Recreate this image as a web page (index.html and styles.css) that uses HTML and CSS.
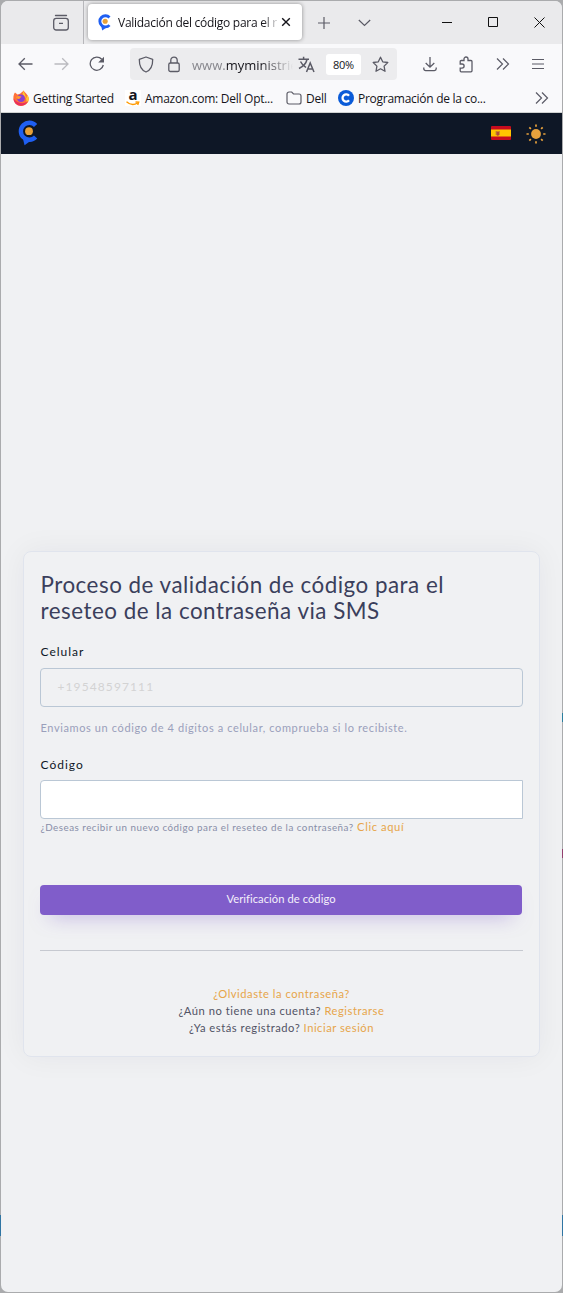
FILE: index.html
```html
<!DOCTYPE html>
<html lang="es">
<head>
<meta charset="utf-8">
<title>Validación del código para el reseteo</title>
<link rel="stylesheet" href="styles.css">
</head>
<body>
<svg class="defs" width="0" height="0" aria-hidden="true">
  <symbol id="brand" viewBox="0 0 22 26">
    <path d="M18.600 5.400A8.500 8.500 0 1 0 18.600 17" fill="none" stroke="#1f5ff2" stroke-width="4.400"/>
    <path d="M5.500 17L7.600 25.300L15 19.800Z" fill="#1f5ff2"/>
    <circle cx="12" cy="11.200" r="3.900" fill="#e8a038"/>
  </symbol>
  <symbol id="more" viewBox="0 0 14 14">
    <path d="M1 1.500L6.500 7L1 12.500M7 1.500L12.500 7L7 12.500" fill="none" stroke="#5b5b66" stroke-width="1.200"/>
  </symbol>
</svg>
<div class="window">
  <header class="tabs">
    <div class="view">
      <svg width="18" height="18" viewBox="0 0 18 18" fill="none" stroke="#5b5b66" stroke-width="1.300"><path d="M3.500 1.500h11" stroke-linecap="round"/><rect x="1.700" y="4.400" width="14.600" height="11.600" rx="2.500"/><path d="M7 9.300h4"/></svg>
    </div>
    <div class="tab">
      <svg width="15" height="17"><use href="#brand"/></svg>
      <span class="tab-title">Validación del código para el r</span>
      <svg class="tab-close" width="10" height="10" viewBox="0 0 10 10"><path d="M1.200 1.200l7.600 7.600M8.800 1.200l-7.600 7.600" stroke="#15141a" stroke-width="1.400"/></svg>
    </div>
    <svg class="plus" width="12" height="12" viewBox="0 0 12 12"><path d="M6 0v12M0 6h12" stroke="#5b5b66" stroke-width="1.200"/></svg>
    <svg class="chev" width="13" height="8" viewBox="0 0 13 8"><path d="M.8 1L6.500 6.500L12.200 1" fill="none" stroke="#5b5b66" stroke-width="1.200"/></svg>
    <div class="controls">
      <svg width="10" height="11" viewBox="0 0 10 11"><path d="M0 5.500h10" stroke="#111"/></svg>
      <svg width="11" height="11" viewBox="0 0 11 11"><path d="M.5 .5h9v9h-9z" fill="none" stroke="#111"/></svg>
      <svg width="11" height="11" viewBox="0 0 11 11"><path d="M.5 .5l10 10M10.500 .5l-10 10" stroke="#111"/></svg>
    </div>
  </header>

  <div class="toolbar">
    <svg class="back" width="15" height="14" viewBox="0 0 15 14" fill="none" stroke="#5b5b66" stroke-width="1.300"><path d="M14.500 7H1.200M6.800 1.200L1 7l5.800 5.800"/></svg>
    <svg class="forward" width="15" height="14" viewBox="0 0 15 14" fill="none" stroke="#bbbbc0" stroke-width="1.300"><path d="M.5 7h13.300M8.200 1.200L14 7l-5.800 5.800"/></svg>
    <svg class="reload" width="16" height="16" viewBox="0 0 16 16"><path d="M12.800 3.300A6.600 6.600 0 1 0 14.300 9" fill="none" stroke="#5b5b66" stroke-width="1.300"/><path d="M15 .8v5.800H9.200z" fill="#5b5b66"/></svg>
    <div class="url">
      <svg width="16" height="17" viewBox="0 0 16 17"><path d="M8 1L14.700 3.300C14.800 9.800 13.300 14 8 16C2.700 14 1.200 9.800 1.300 3.300Z" fill="none" stroke="#5b5b66" stroke-width="1.300" stroke-linejoin="round"/></svg>
      <svg class="lock" width="12" height="17" viewBox="0 0 12 17" fill="none" stroke="#5b5b66" stroke-width="1.300"><rect x=".8" y="7" width="10.400" height="8.500" rx="1.600"/><path d="M2.800 7V4.300a3.200 3.200 0 0 1 6.400 0V7"/></svg>
      <span class="address">www.<b>myministrie</b></span>
      <svg class="translate" width="17" height="17" viewBox="0 0 17 17" fill="none" stroke="#5b5b66" stroke-width="1.500"><path d="M.5 3.300h10.500M5.600 .8v2.500M2.500 5.500C4.500 9.500 6.500 10.500 8 11.500M9 3.500C8 8 4 11 1 12.500"/><path d="M8.500 16L12.200 7L16 16M9.800 13h5"/></svg>
      <span class="percent">80%</span>
      <svg class="star" width="17" height="17" viewBox="0 0 17 17"><path d="M8.500 1.200L10.700 5.800L15.800 6.500L12.100 10.100L13 15.300L8.500 12.800L4 15.300L4.900 10.100L1.200 6.500L6.300 5.800Z" fill="none" stroke="#5b5b66" stroke-width="1.300" stroke-linejoin="round"/></svg>
    </div>
    <div class="tools">
      <svg width="14" height="16" viewBox="0 0 14 16" fill="none" stroke="#5b5b66" stroke-width="1.300"><path d="M7 1v10M2.700 7L7 11.200L11.300 7M.8 11.500v1.300a1.800 1.800 0 0 0 1.800 1.800h8.800a1.800 1.800 0 0 0 1.800-1.800V11.500"/></svg>
      <svg width="14" height="17" viewBox="0 0 14 17"><path d="M1.200 8V5.500a1 1 0 0 1 1-1H5V3a2 2 0 0 1 4 0v1.500h3a1 1 0 0 1 1 1v9.300a1 1 0 0 1-1 1H2.200a1 1 0 0 1-1-1v-2.600H3a2 2 0 0 0 0-4.200Z" fill="none" stroke="#5b5b66" stroke-width="1.300"/></svg>
      <svg width="14" height="14"><use href="#more"/></svg>
      <svg width="12" height="12" viewBox="0 0 12 12"><path d="M0 1.500h12M0 6h12M0 10.500h12" stroke="#5b5b66" stroke-width="1.200"/></svg>
    </div>
  </div>

  <nav class="bookmarks">
    <svg class="firefox" width="16" height="16" viewBox="0 0 16 16"><path d="M2 2.500L4.500 4.500L7 3.800L10.800 .5C11.500 3 15.800 4.500 15.800 9A7.600 7.200 0 0 1 .4 8.500C.3 6 .9 4 2 2.500Z" fill="#ff7139"/><path d="M10.800 .5C10.800 3.500 13 5 13 8.500C14 7.500 13.500 6 14.500 5C16.500 8 16 12 13 14C15 8 11 6.500 9.500 4Z" fill="#ffcb2e"/><path d="M.5 8.500C1 13 4 15.800 8 15.700C12 15.700 14 13.500 15 11C10 15 4 13 .5 8.500Z" fill="#e9305d"/><circle cx="8" cy="8.200" r="3.800" fill="#8a3fd1"/><path d="M3 7c2-1.500 4-.8 5.500-.5C8 7.500 6.500 8 6.500 9C4.500 9 3.500 8.500 3 7Z" fill="#ff9a2b"/></svg>
    <span class="bm bm-start">Getting Started</span>
    <span class="amazon"><b>a</b><svg width="14" height="5" viewBox="0 0 14 5"><path d="M.5 .8Q6 5.500 11.500 2M9.500 1l3.200.2L11.700 4" fill="none" stroke="#f90" stroke-width="1.400"/></svg></span>
    <span class="bm bm-amazon">Amazon.com: Dell Opt...</span>
    <svg class="folder" width="16" height="14" viewBox="0 0 16 14"><path d="M1 3a2 2 0 0 1 2-2h2.700l1.800 2H13a2 2 0 0 1 2 2v6a2 2 0 0 1-2 2H3a2 2 0 0 1-2-2Z" fill="none" stroke="#5b5b66" stroke-width="1.200"/></svg>
    <span class="bm bm-dell">Dell</span>
    <svg class="prog" width="16" height="16" viewBox="0 0 16 16"><circle cx="8" cy="8" r="8" fill="#0a5bd8"/><path d="M11 5.800A3.600 3.600 0 1 0 11 10.200" fill="none" stroke="#fff" stroke-width="2.300"/></svg>
    <span class="bm bm-prog">Programación de la co...</span>
    <svg class="bm-more" width="14" height="14"><use href="#more"/></svg>
  </nav>

  <div class="site-nav">
    <svg class="logo" width="22" height="26"><use href="#brand"/></svg>
    <svg class="flag" width="20" height="14" viewBox="0 0 20 14"><rect width="20" height="14" rx="1" fill="#c60b1e"/><rect y="3.500" width="20" height="7" fill="#ffc400"/><path d="M4.500 5h1.500v4h-1.500zM8 5h1v4H8z" fill="#c8912c"/><path d="M5.500 5.500h2.500v3a1.200 1.200 0 0 1-2.500 0z" fill="#b34a35"/></svg>
    <svg class="sun" width="20" height="20" viewBox="0 0 20 20"><circle cx="10" cy="10" r="4.900" fill="#e7a13d"/><path d="M10 .5v2.300M10 17.200v2.300M.5 10h2.300M17.200 10h2.300M3.300 3.300l1.600 1.600M15.100 15.100l1.600 1.600M3.300 16.700l1.600-1.600M15.100 4.900l1.600-1.600" stroke="#e7a13d" stroke-width="1.700"/></svg>
  </div>

  <main class="page">
    <section class="card">
      <h1><span class="t1">Proceso de validación de código para el</span><br><span class="t2">reseteo de la contraseña via SMS</span></h1>
      <label class="label">Celular</label>
      <div class="field disabled">+19548597111</div>
      <p class="hint">Enviamos un código de 4 dígitos a celular, comprueba si lo recibiste.</p>
      <label class="label second">Código</label>
      <div class="field code"></div>
      <p class="resend"><small>¿Deseas recibir un nuevo código para el reseteo de la contraseña?</small> <a>Clic aquí</a></p>
      <button class="submit">Verificación de código</button>
      <hr>
      <div class="links">
        <div><a>¿Olvidaste la contraseña?</a></div>
        <div>¿Aún no tiene una cuenta? <a>Registrarse</a></div>
        <div>¿Ya estás registrado? <a>Iniciar sesión</a></div>
      </div>
    </section>
  </main>
</div>
</body>
</html>
```
FILE: styles.css
```css
* { box-sizing: border-box; }
html { background: #aaabad; }
body { margin: 0; padding: 1px; background: linear-gradient(#2f75a3, #2f75a3) 0 1215px / 100% 21px no-repeat, linear-gradient(#2b7f9f, #2b7f9f) 100% 713px / 1px 9px no-repeat, linear-gradient(#93406f, #93406f) 100% 849px / 1px 9px no-repeat; font-family: "Open Sans", sans-serif; }
.defs { position: absolute; }
svg { display: block; flex: none; }
.window { width: 561px; height: 1291px; border-radius: 7px; overflow: hidden; background: #f0f1f3; display: flex; flex-direction: column; }

.tabs { height: 43px; background: #eaeaec; display: flex; align-items: center; flex: none; }
.view { width: 83px; height: 43px; border-right: 1px solid #b7b7bb; padding: 13px 0 0 51px; }
.tab { width: 214px; height: 36px; margin: -1px 0 0 4px; background: #fff; border-radius: 4px; box-shadow: 0 0 4px rgba(0,0,0,.4); display: flex; align-items: center; padding-left: 9px; }
.tab-title { width: 162px; margin-left: 6px; overflow: hidden; white-space: nowrap; font-size: 12px; letter-spacing: -.27px; color: #15141a; -webkit-mask-image: linear-gradient(90deg, #000 145px, transparent 162px); mask-image: linear-gradient(90deg, #000 145px, transparent 162px); }
.tab-close { margin-left: 1px; }
.plus { margin-left: 16px; }
.chev { margin-left: 28px; }
.controls { display: flex; margin-left: 71px; gap: 36px; }
.controls svg:last-child { margin-left: -1px; }

.toolbar { height: 40px; background: #f9f9fb; display: flex; align-items: center; flex: none; }
.back { margin-left: 17px; }
.forward { margin-left: 21px; }
.reload { margin-left: 20px; }
.url { width: 267px; height: 32px; margin-left: 25px; background: #ececee; border-radius: 4px; display: flex; align-items: center; padding-left: 8px; }
.lock { margin-left: 14px; }
.address { width: 101px; margin-left: 12px; overflow: hidden; white-space: nowrap; font-size: 13px; line-height: 20px; padding-top: 1px; color: #87878d; -webkit-mask-image: linear-gradient(90deg, #000 68px, transparent 101px); mask-image: linear-gradient(90deg, #000 68px, transparent 101px); }
.address b { font-weight: 400; color: #15141a; }
.translate { margin-left: 5px; }
.percent { width: 35px; height: 21px; margin-left: 11px; background: #fff; border-radius: 3px; font-size: 11px; line-height: 21px; letter-spacing: -.3px; text-align: center; color: #15141a; }
.star { margin-left: 11px; }
.tools { display: flex; align-items: center; margin-left: 26px; gap: 22.400px; }

.bookmarks { height: 29px; background: #f9f9fb; border-bottom: 1px solid #cfd2d1; display: flex; align-items: center; flex: none; font-size: 12px; color: #15141a; white-space: nowrap; }
.firefox { margin-left: 12px; }
.bm { margin-left: 4px; letter-spacing: -.27px; }
.bm-start { width: 81px; }
.bm-amazon { width: 128px; }
.bm-dell { width: 21px; }
.bm-prog { width: 129px; }
.amazon { width: 16px; height: 16px; margin-left: 11px; background: #fff; display: flex; flex-direction: column; align-items: center; }
.amazon b { height: 11px; font-size: 15px; line-height: 9px; }
.folder { margin-left: 13px; }
.prog { margin-left: 11px; }
.bm-more { margin-left: 48px; }

.site-nav { height: 41px; background: #0e1726; display: flex; align-items: center; flex: none; padding-left: 16px; }
.logo { margin-top: -1px; }
.flag { margin: -1px 0 0 452px; }
.sun { margin-left: 15px; }

.page { flex: 1; padding: 397px 22px 0; font-family: Lato, sans-serif; }
.card { height: 506px; border: 1px solid #e0e4ed; border-radius: 8px; box-shadow: 0 0 30px rgba(31,45,61,.055); padding: 20px 16px 0; }
h1 { margin: 0; height: 52px; padding-left: .5px; font-size: 22.400px; font-weight: 400; line-height: 26px; letter-spacing: .5px; color: #3b3f5c; white-space: nowrap; }
.label { display: block; height: 16px; margin-top: 20px; padding-left: .5px; font-size: 12px; line-height: 16px; letter-spacing: 1px; color: #0e1726; }
.second { padding-top: 1px; }
.field { height: 39px; margin-top: 8px; border: 1px solid #bac7d5; border-radius: 4px; padding-left: 16.500px; font-size: 12px; line-height: 36px; letter-spacing: 1.100px; color: #d3d3d3; }
.code { background: #fff; border-radius: 4px 0 0 4px; }
.hint { margin: 13px 0 0; height: 16px; padding-left: .5px; font-size: 11px; line-height: 16px; letter-spacing: .61px; color: #9a9fbb; white-space: nowrap; }
.resend { margin: 0; height: 17px; padding-left: .5px; font-size: 11.200px; line-height: 16px; letter-spacing: .6px; white-space: nowrap; color: #888ea8; }
.resend small { font-size: 9.800px; letter-spacing: .5px; }
a { color: #e7a54a; }
.submit { display: block; width: 482px; height: 30px; margin-top: 49px; padding: 0 0 3px; border: 0; border-radius: 4px; background: #805dca; box-shadow: 0 10px 20px -10px rgba(128,93,202,.59); color: #f4f0fb; font: 11.200px Lato, sans-serif; letter-spacing: .05px; }
hr { height: 1px; margin: 35px 0 0; border: 0; background: #c6c9d0; }
.links { margin-top: 34px; font-size: 11.200px; line-height: 17px; letter-spacing: .52px; text-align: center; color: #515365; }
```
